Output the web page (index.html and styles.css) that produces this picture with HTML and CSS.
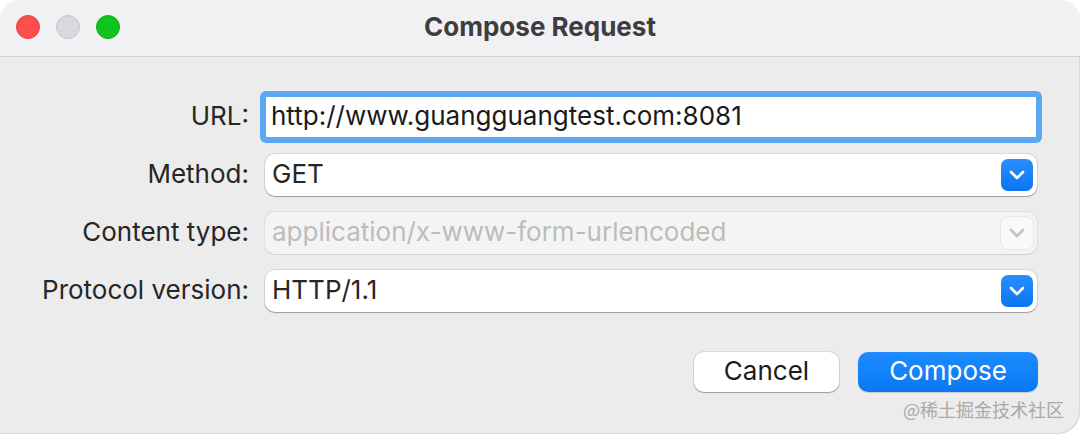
FILE: index.html
```html
<!DOCTYPE html>
<html>
<head>
<meta charset="utf-8">
<link rel="stylesheet" href="styles.css">
</head>
<body>
<div class="window">
  <div class="titlebar">
    <div class="lights">
      <span class="light red"></span>
      <span class="light gray"></span>
      <span class="light green"></span>
    </div>
    <div class="title">Compose Request</div>
  </div>
  <div class="content">
    <div class="form">
      <label class="label">URL:</label>
      <div class="field text focus">http://www.guangguangtest.com:8081</div>

      <label class="label">Method:</label>
      <div class="field select"><span>GET</span>
        <span class="arrow"><svg width="16" height="10" viewBox="0 0 16 10"><path d="M2 2 L8 8 L14 2" fill="none" stroke="#fff" stroke-width="2.6" stroke-linecap="round" stroke-linejoin="round"/></svg></span>
      </div>

      <label class="label">Content type:</label>
      <div class="field select disabled"><span>application/x-www-form-urlencoded</span>
        <span class="arrow"><svg width="16" height="10" viewBox="0 0 16 10"><path d="M2 2 L8 8 L14 2" fill="none" stroke="#c4c4c4" stroke-width="2.6" stroke-linecap="round" stroke-linejoin="round"/></svg></span>
      </div>

      <label class="label">Protocol version:</label>
      <div class="field select"><span>HTTP/1.1</span>
        <span class="arrow"><svg width="16" height="10" viewBox="0 0 16 10"><path d="M2 2 L8 8 L14 2" fill="none" stroke="#fff" stroke-width="2.6" stroke-linecap="round" stroke-linejoin="round"/></svg></span>
      </div>
    </div>
    <div class="buttons">
      <button class="btn cancel">Cancel</button>
      <button class="btn primary">Compose</button>
    </div>
    <div class="watermark">@稀土掘金技术社区</div>
  </div>
</div>
</body>
</html>
```
FILE: styles.css
```css
* { box-sizing: border-box; }
html, body { margin: 0; padding: 0; }
body {
  width: 1080px;
  height: 434px;
  background: #ffffff;
  font-family: Inter, "Noto Sans", "Noto Sans CJK SC", sans-serif;
  overflow: hidden;
}
.window {
  width: 1080px;
  height: 434px;
  background: #ececec;
  border-radius: 20px 20px 22px 0;
  overflow: hidden;
  display: flex;
  flex-direction: column;
  box-shadow: inset -1px -1px 0 #d8d8d8;
}
.titlebar {
  height: 57px;
  flex: none;
  background: #f1f0f2;
  border-bottom: 1px solid #d3d2d4;
  display: flex;
  align-items: center;
  justify-content: center;
  position: relative;
}
.lights {
  position: absolute;
  left: 16px;
  top: 15px;
  display: flex;
  gap: 16px;
}
.light {
  width: 24px;
  height: 24px;
  border-radius: 50%;
  display: block;
}
.red { background: #fe4f4f; border: 1px solid #e6413f; }
.gray { background: #d9d8dc; border: 1px solid #c5c4c8; }
.green { background: #0fc41d; border: 1px solid #0aab19; }
.title {
  font-size: 26px;
  font-weight: 700;
  color: #3d3d3f;
  margin-top: -3px;
}
.content {
  flex: 1;
  position: relative;
  padding: 39px 43px 0 0;
}
.form {
  display: grid;
  grid-template-columns: 249px 1fr;
  column-gap: 16px;
  row-gap: 16px;
  align-items: center;
}
.label {
  text-align: right;
  font-size: 26px;
  color: #262626;
  line-height: 40px;
  padding-bottom: 2px;
  white-space: nowrap;
}
.field {
  height: 42px;
  background: #ffffff;
  font-size: 26px;
  color: #1a1a1a;
  display: flex;
  align-items: center;
  padding-left: 7px;
  white-space: nowrap;
}
.field > span:first-child, .text {
  line-height: 1;
}
.field > span:first-child {
  margin-top: -2px;
}
.text {
  border: 1px solid #9e9e9e;
  padding-left: 5px;
  padding-bottom: 2px;
}
.focus {
  box-shadow: 0 0 0 5px #5aa8f5;
  border-color: #5aa8f5;
  border-radius: 2px;
}
.select {
  border-radius: 10px;
  box-shadow: 0 1px 1px rgba(0,0,0,0.28), 0 0 0 1px rgba(0,0,0,0.08);
  justify-content: space-between;
  padding-right: 4px;
  color: #262626;
}
.arrow {
  width: 32px;
  height: 32px;
  border-radius: 7px;
  background: linear-gradient(#2a8ffd, #0a74f5);
  display: flex;
  align-items: center;
  justify-content: center;
}
.disabled {
  background: #f4f4f4;
  color: #bcbcbc;
  box-shadow: 0 0 0 1px rgba(0,0,0,0.05), 0 1px 0 rgba(0,0,0,0.06);
}
.disabled .arrow {
  background: #f9f9f9;
  box-shadow: 0 0 0 1px rgba(0,0,0,0.05);
}
.buttons {
  display: flex;
  justify-content: flex-end;
  gap: 19px;
  margin-top: 40px;
  margin-right: -1px;
}
.btn {
  height: 40px;
  border: none;
  border-radius: 10px;
  font-family: inherit;
  font-size: 26px;
  padding: 0 0 3px 0;
}
.cancel {
  width: 145px;
  background: #ffffff;
  color: #1c1c1c;
  box-shadow: 0 1px 1px rgba(0,0,0,0.28), 0 0 0 1px rgba(0,0,0,0.08);
}
.primary {
  width: 180px;
  background: linear-gradient(#1e8cff, #0a78f2);
  color: #ffffff;
  box-shadow: 0 1px 1px rgba(0,0,0,0.15);
}
.watermark {
  position: absolute;
  right: 16px;
  bottom: 12px;
  font-size: 18px;
  color: #a9a9a9;
  font-family: "Noto Sans CJK SC", sans-serif;
}
```
